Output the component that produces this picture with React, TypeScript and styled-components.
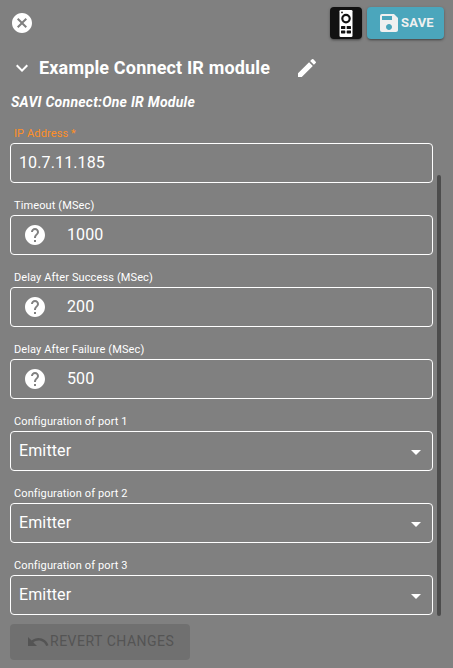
import React from "react";
import styled, { createGlobalStyle, css } from "styled-components";
import {
  MdArrowDropDown,
  MdCancel,
  MdEdit,
  MdExpandMore,
  MdHelp,
  MdSave,
  MdUndo,
} from "react-icons/md";

const GlobalStyle = createGlobalStyle`
  * { box-sizing: border-box; }
  body {
    margin: 0;
    background: #808080;
    color: #fff;
    font-family: Roboto, "Liberation Sans", sans-serif;
  }
  svg { display: block; flex: none; }
  button { font: inherit; color: inherit; border: 0; padding: 0; margin: 0; background: none; }
`;

const Panel = styled.main`
  display: flex;
  flex-direction: column;
  height: 668px;
  padding: 7px 9px 8px 10px;
  overflow: hidden;
`;

const Toolbar = styled.header`
  display: flex;
  align-items: flex-start;
  height: 45px;
  gap: 5px;
`;

const CloseButton = styled.button`
  margin: 4px auto 0 0;
`;

const raised = css`
  border-radius: 4px;
  box-shadow: 0 2px 2px -1px rgba(0, 0, 0, 0.25), 0 1px 3px rgba(0, 0, 0, 0.3);
`;

const RemoteButton = styled.button`
  ${raised}
  display: flex;
  align-items: center;
  justify-content: center;
  width: 32px;
  height: 32px;
  background: #111;
`;

const SaveButton = styled.button`
  ${raised}
  display: flex;
  align-items: center;
  width: 77px;
  height: 32px;
  padding-left: 10px;
  background: #4ba6bc;
  color: #f0f0f0;
  font-size: 13px;
  font-weight: 700;
  letter-spacing: 0.2px;
  line-height: 16px;
`;

const ButtonText = styled.span`
  margin-bottom: 2px;
`;

const TitleRow = styled.div`
  display: flex;
  align-items: center;
  height: 32px;
`;

const Title = styled.h1`
  margin: 0 25px 0 5px;
  font-size: 18px;
  font-weight: 700;
  letter-spacing: 0.16px;
  line-height: 24px;
`;

const Subtitle = styled.p`
  margin: 10px 0 0 1px;
  font-size: 14px;
  font-weight: 700;
  font-style: italic;
  letter-spacing: 0.25px;
  line-height: 16px;
`;

const ScrollArea = styled.section`
  display: flex;
  gap: 4px;
  height: 506px;
  padding-top: 16px;
`;

const Fields = styled.div`
  width: 423px;
`;

const Field = styled.div`
  height: 72px;
`;

const Label = styled.label<{ $required?: boolean }>`
  display: block;
  height: 17px;
  padding-left: 4px;
  font-size: 11px;
  font-weight: 400;
  letter-spacing: 0.12px;
  line-height: 15px;
  color: ${({ $required }) => ($required ? "#ff8f26" : "#fff")};
`;

const Control = styled.div`
  display: flex;
  align-items: center;
  height: 40px;
  padding: 0 4px 0 8px;
  border: 1px solid #fff;
  border-radius: 4px;
`;

const HelpIcon = styled(MdHelp)`
  margin: 0 20px 0 4px;
`;

const Value = styled.span`
  flex: 1;
  font-size: 16px;
  letter-spacing: 0.12px;
  line-height: 20px;
  margin-bottom: 1px;
`;

const DropIcon = styled(MdArrowDropDown)`
  margin-top: 2px;
`;

const ScrollThumb = styled.div`
  width: 4px;
  height: 441px;
  margin-top: 49px;
  border-radius: 2px;
  background: #4c4c4c;
`;

const RevertButton = styled.button`
  display: flex;
  align-items: center;
  width: 180px;
  height: 36px;
  margin-top: 8px;
  padding-left: 16px;
  border-radius: 4px;
  background: #707070;
  color: #545454;
  font-size: 14px;
  font-weight: 400;
  letter-spacing: 0.51px;
`;

const RemoteIcon = () => (
  <svg width="14" height="27" viewBox="0 0 14 27">
    <rect x="0.5" width="13" height="27" rx="1.3" fill="#fff" />
    <circle cx="3" cy="2.4" r="0.9" fill="#111" />
    <circle cx="7" cy="8.6" r="3.7" fill="none" stroke="#111" strokeWidth="2.2" />
    <g fill="#111">
      <rect x="2" y="16" width="4.3" height="3" rx="0.6" />
      <rect x="7.7" y="16" width="4.3" height="3" rx="0.6" />
      <rect x="2" y="20.4" width="4.3" height="3" rx="0.6" />
      <rect x="7.7" y="20.4" width="4.3" height="3" rx="0.6" />
    </g>
  </svg>
);

type FieldData = {
  label: string;
  value: string;
  kind: "text" | "number" | "select";
  required?: boolean;
};

const fields: FieldData[] = [
  { label: "IP Address *", value: "10.7.11.185", kind: "text", required: true },
  { label: "Timeout (MSec)", value: "1000", kind: "number" },
  { label: "Delay After Success (MSec)", value: "200", kind: "number" },
  { label: "Delay After Failure (MSec)", value: "500", kind: "number" },
  { label: "Configuration of port 1", value: "Emitter", kind: "select" },
  { label: "Configuration of port 2", value: "Emitter", kind: "select" },
  { label: "Configuration of port 3", value: "Emitter", kind: "select" },
];

export default function App() {
  return (
    <>
      <GlobalStyle />
      <Panel>
        <Toolbar>
          <CloseButton aria-label="Close">
            <MdCancel size={24} />
          </CloseButton>
          <RemoteButton aria-label="Remote">
            <RemoteIcon />
          </RemoteButton>
          <SaveButton>
            <MdSave size={24} />
            <span>SAVE</span>
          </SaveButton>
        </Toolbar>
        <TitleRow>
          <MdExpandMore size={24} />
          <Title>Example Connect IR module</Title>
          <MdEdit size={24} />
        </TitleRow>
        <Subtitle>SAVI Connect:One IR Module</Subtitle>
        <ScrollArea>
          <Fields>
            {fields.map(({ label, value, kind, required }) => (
              <Field key={label}>
                <Label $required={required}>{label}</Label>
                <Control>
                  {kind === "number" && <HelpIcon size={24} />}
                  <Value>{value}</Value>
                  {kind === "select" && <DropIcon size={24} />}
                </Control>
              </Field>
            ))}
          </Fields>
          <ScrollThumb />
        </ScrollArea>
        <RevertButton disabled>
          <MdUndo size={24} />
          <ButtonText>REVERT CHANGES</ButtonText>
        </RevertButton>
      </Panel>
    </>
  );
}
